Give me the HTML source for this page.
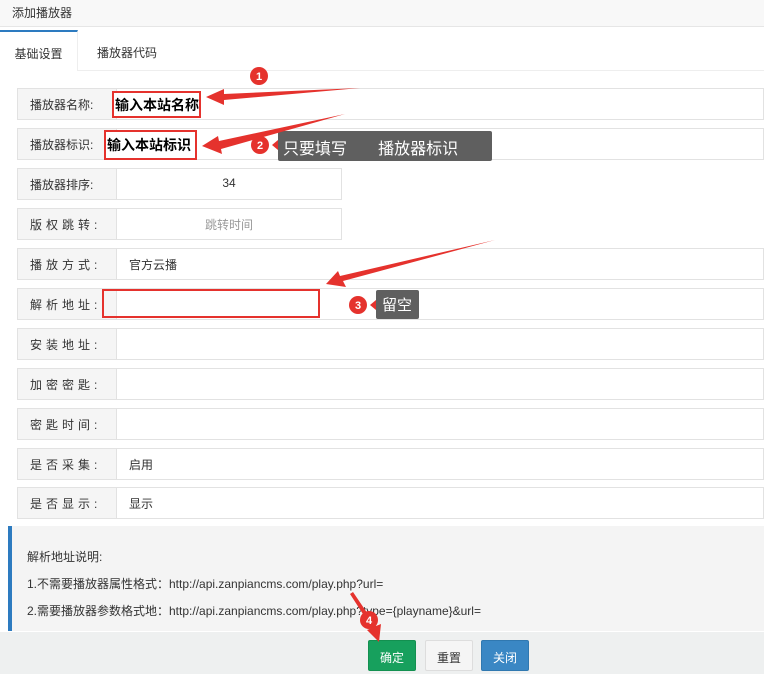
<!DOCTYPE html>
<html><head><meta charset="utf-8">
<style>
*{margin:0;padding:0;box-sizing:border-box}
body{width:764px;height:674px;background:#fff;position:relative;overflow:hidden;font-family:"Liberation Sans","Noto Sans CJK SC",sans-serif;font-size:12px;color:#333}
.a{position:absolute}
.hdr{left:0;top:0;width:764px;height:27px;background:#f8f8f8;border-bottom:1px solid #e6e6e6;padding:4px 0 0 12px;color:#333}
.tabline{left:0;top:70px;width:764px;height:1px;background:#eee}
.tab1{left:0;top:30px;width:78px;height:41px;border-top:2px solid #2d7bc0;background:#fff;border-right:1px solid #eee;padding-top:13px;text-align:center}
.tab2{left:97px;top:44px}
.lab{position:absolute;left:17px;width:100px;height:32px;background:#f5f5f5;border:1px solid #e2e2e2;padding:7px 0 0 12px;letter-spacing:0}
.sp{letter-spacing:4px}
.inp{position:absolute;left:116px;height:32px;border:1px solid #e2e2e2;padding:7px 0 0 12px;background:#fff}
.info{left:8px;top:526px;width:756px;height:105px;background:#f4f4f4;border-left:4px solid #2d7bc0}
.info p{position:absolute;left:15px}
.foot{left:0;top:632px;width:764px;height:42px;background:#eef0f0}
.btn{position:absolute;top:640px;height:31px;width:48px;text-align:center;padding-top:8px;border-radius:2px}
</style></head><body>
<div class="a hdr">添加播放器</div>
<div class="a tabline"></div>
<div class="a tab1">基础设置</div>
<div class="a tab2">播放器代码</div>

<div class="lab" style="top:88px">播放器名称:</div><div class="inp" style="top:88px;width:648px"></div>
<div class="lab" style="top:128px">播放器标识:</div><div class="inp" style="top:128px;width:648px"></div>
<div class="lab" style="top:168px">播放器排序:</div><div class="inp" style="top:168px;width:226px;text-align:center;padding-left:0">34</div>
<div class="lab sp" style="top:208px">版权跳转:</div><div class="inp" style="top:208px;width:226px;text-align:center;padding-left:0;color:#999">跳转时间</div>
<div class="lab sp" style="top:248px">播放方式:</div><div class="inp" style="top:248px;width:648px">官方云播</div>
<div class="lab sp" style="top:288px">解析地址:</div><div class="inp" style="top:288px;width:648px"></div>
<div class="lab sp" style="top:328px">安装地址:</div><div class="inp" style="top:328px;width:648px"></div>
<div class="lab sp" style="top:368px">加密密匙:</div><div class="inp" style="top:368px;width:648px"></div>
<div class="lab sp" style="top:408px">密匙时间:</div><div class="inp" style="top:408px;width:648px"></div>
<div class="lab sp" style="top:448px">是否采集:</div><div class="inp" style="top:448px;width:648px">启用</div>
<div class="lab sp" style="top:487px">是否显示:</div><div class="inp" style="top:487px;width:648px">显示</div>

<div class="a info">
<p style="top:22px">解析地址说明:</p>
<p style="top:49px">1.不需要播放器属性格式：http://api.zanpiancms.com/play.php?url=</p>
<p style="top:76px">2.需要播放器参数格式地：http://api.zanpiancms.com/play.php?type={playname}&amp;url=</p>
</div>
<div class="a foot"></div>
<div class="btn" style="left:368px;background:#17a05d;color:#fff;border:1px solid #139050">确定</div>
<div class="btn" style="left:425px;background:#f5f5f5;border:1px solid #ddd">重置</div>
<div class="btn" style="left:481px;background:#3a87c4;color:#fff;border:1px solid #3078b0">关闭</div>

<div class="a" style="left:112px;top:91px;width:89px;height:27px;border:2px solid #e5322d;background:#fff;font-weight:bold;font-size:14px;color:#000;padding:2px 0 0 1px;white-space:nowrap;overflow:hidden">输入本站名称</div>
<div class="a" style="left:104px;top:130px;width:93px;height:30px;border:2px solid #e5322d;background:#fff;font-weight:bold;font-size:14px;color:#000;padding:3px 0 0 1px;white-space:nowrap;overflow:hidden">输入本站标识</div>
<div class="a" style="left:102px;top:289px;width:218px;height:29px;border:2px solid #e5322d"></div>
<div class="a" style="left:278px;top:131px;width:214px;height:30px;background:#5f5f5f;border-radius:2px;color:#fff;font-size:16px;padding:4px 0 0 5px;white-space:pre">只要填写       播放器标识</div>
<div class="a" style="left:376px;top:290px;width:43px;height:29px;background:#5f5f5f;border-radius:2px;color:#fff;font-size:15px;padding:4px 0 0 6px">留空</div>
<svg class="a" style="left:0;top:0" width="764" height="674">
<g fill="#e5322d">
<polygon points="206,97 224,89 224,94 360,88 224,100 224,105"/>
<polygon points="202,146 218,136 219,141 345,114 221,149 222,154"/>
<polygon points="326,284 338,271 340,276 495,240 343,281 346,287"/>
<polygon points="272,145 278,140 278,150"/>
<polygon points="370,305 376,300 376,310"/>
<polygon points="379,642 367,630 372,628 350,594 353,592 376,626 381,624"/>
<circle cx="259" cy="76" r="9"/><circle cx="260" cy="145" r="9"/><circle cx="358" cy="305" r="9"/><circle cx="369" cy="620" r="9"/>
</g>
<g fill="#fff" font-size="11" font-family="Liberation Sans,sans-serif" text-anchor="middle" font-weight="bold">
<text x="259" y="80">1</text><text x="260" y="149">2</text><text x="358" y="309">3</text><text x="369" y="624">4</text>
</g>
</svg>
</body></html>
